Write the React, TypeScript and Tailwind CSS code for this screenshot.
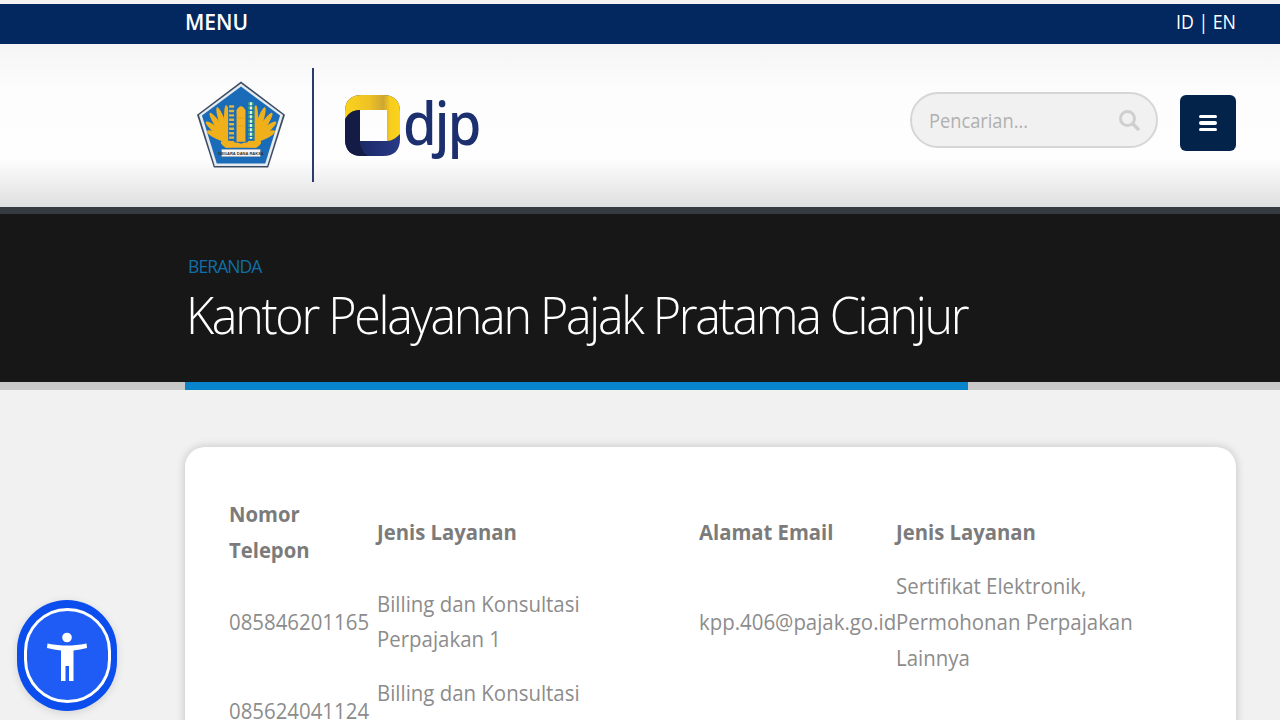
import React from "react";

const FEATHERS = [
  { a: -4, ry: 18 },
  { a: -19, ry: 18 },
  { a: -34, ry: 17 },
  { a: -50, ry: 15 },
  { a: -66, ry: 12 },
];

function Wing() {
  return (
    <g>
      {FEATHERS.map((f) => (
        <ellipse
          key={f.a}
          cx="33"
          cy={60 - f.ry}
          rx="3.2"
          ry={f.ry}
          fill="#f0b01a"
          transform={`rotate(${f.a} 33 60)`}
        />
      ))}
      <path d="M25 62 C27 55 35 55 38 60 C40 63 40 65 42 66 L30 67 C28 66 26 64 25 62Z" fill="#f0b01a" />
    </g>
  );
}

function Emblem() {
  return (
    <svg width="90" height="90" viewBox="0 0 91 90" className="shrink-0">
      <polygon points="45.5,0 90,33.5 73,87 18,87 1,33.5" fill="#3c4c63" />
      <polygon points="45.5,2 88,34 72,85.5 19,85.5 3,34" fill="#e6ebef" />
      <polygon points="45.5,5 85,34.5 70,83 21,83 6,34.5" fill="#1b6cb8" />
      <Wing />
      <g transform="translate(91 0) scale(-1 1)">
        <Wing />
      </g>
      <path d="M36 22 L36 60" stroke="#1b6cb8" strokeWidth="7" />
      <path d="M36 22 L36 60" stroke="#55603a" strokeWidth="1" />
      <path d="M36 24 L36 58" stroke="#d8b848" strokeWidth="5" strokeDasharray="2.5 2" />
      <path d="M55.5 20 L55.5 60" stroke="#1b6cb8" strokeWidth="7.5" />
      <path d="M41 61 L41 29 Q45.5 21 50 29 L50 61Z" fill="#f3b022" />
      <path d="M41 37 H50 M41 45 H50" stroke="#d89a1a" strokeWidth="0.6" />
      <path d="M55.5 21 L55.5 58" stroke="#38a878" strokeWidth="5.5" strokeDasharray="3 1.4" />
      <path d="M55.5 21 L55.5 58" stroke="#eaf6ee" strokeWidth="2" strokeDasharray="3 1.4" />
      <path d="M30 67 C36 61 40 61 45.5 63 C51 61 55 61 61 67Z" fill="#f3b022" />
      <rect x="26" y="68.5" width="39" height="7.5" fill="#f6f6f6" stroke="#8a8a8a" strokeWidth="0.4" />
      <text x="45.5" y="74" textAnchor="middle" fontSize="4.1" fontWeight="700" fill="#333" fontFamily="'Liberation Sans',sans-serif">NEGARA DANA RAKSA</text>
    </svg>
  );
}

function DjpMark() {
  return (
    <svg width="55" height="61" viewBox="0 0 55 61" className="shrink-0">
      <defs>
        <linearGradient id="yl" x1="0" y1="0" x2="1" y2="0">
          <stop offset="0" stopColor="#fbd31b" />
          <stop offset="0.45" stopColor="#eec126" />
          <stop offset="0.7" stopColor="#cda633" />
          <stop offset="0.82" stopColor="#f7cd1e" />
          <stop offset="1" stopColor="#fbd31b" />
        </linearGradient>
        <linearGradient id="nv" x1="0" y1="0" x2="1" y2="0">
          <stop offset="0" stopColor="#18235a" />
          <stop offset="1" stopColor="#283a88" />
        </linearGradient>
      </defs>
      <path
        fillRule="evenodd"
        d="M0 17 Q0 0 17 0 H38 Q55 0 55 17 V44 Q55 61 38 61 H17 Q0 61 0 44Z M15 15 V46 H42 V15Z"
        fill="url(#nv)"
      />
      <path d="M0 25 V17 Q0 0 17 0 H38 Q55 0 55 17 V39 C51 43 47 46 42 46 V15 H15 C8 15 2 19 0 25Z" fill="url(#yl)" />
      <path d="M0 25 C2 19 8 15 15 15 V46 C15 52 18 58 23 61 H17 Q0 61 0 44Z" fill="#141c45" />
    </svg>
  );
}

function Accessibility() {
  return (
    <div className="absolute left-[17px] top-[600px] flex h-[111px] w-[100px] items-center justify-center rounded-full bg-[#0b4ded] shadow-[0_2px_8px_rgba(0,0,0,0.12)]">
      <div className="flex h-[95px] w-[87px] items-center justify-center rounded-full border-[3px] border-white bg-[#1f5cf5]">
        <svg width="42" height="52" viewBox="0 0 42 52">
          <circle cx="21" cy="7.5" r="4.8" fill="#fff" />
          <path d="M1.5 13.5 C9 15 15 15.5 21 15.5 C27 15.5 33 15 40.5 13.5 L41 18 C36 19 32 20 27.5 20.5 L27.5 51 L23 51 L23 36 L19.5 36 L19.5 51 L15 51 L15 20.5 C10 20 6 19 1 18Z" fill="#fff" />
        </svg>
      </div>
    </div>
  );
}

const th = "align-middle text-left text-[21px] font-bold leading-[36px] text-[#7b7b7b] whitespace-nowrap";
const td = "align-middle text-[21px] font-normal leading-[36px] text-[#8c8c8c] whitespace-nowrap";
const tdTwoLine = "align-middle text-[21px] font-normal leading-[35px] text-[#8c8c8c] whitespace-nowrap";
const thText = "inline-block origin-left scale-x-[0.965]";
const tdText = "inline-block origin-left scale-x-[0.972]";

export default function App() {
  return (
    <div className="relative flex h-[720px] w-[1280px] flex-col overflow-hidden bg-[#f1f1f1] font-['Open_Sans',sans-serif]">
      <div className="h-1 shrink-0 bg-[#f4f4f4]" />
      <div className="flex h-10 shrink-0 items-center justify-between bg-[#03275f] pl-[185px] pr-[44px] text-white">
        <span className="-mt-1 text-[21px] font-semibold leading-none">MENU</span>
        <span className="-mt-1 inline-block origin-right scale-x-[0.91] text-[19.5px] font-medium leading-none">ID | EN</span>
      </div>
      <div className="flex h-[163px] shrink-0 items-center justify-between bg-[linear-gradient(#f5f5f5_0%,#fdfdfd_30%,#fefefe_70%,#dfdfdf_100%)] pl-[196px] pr-[44px]">
        <div className="flex items-center">
          <Emblem />
          <div className="mb-[2px] ml-[26px] mr-[31px] h-[114px] w-[2px] bg-[#2b3a70]" />
          <DjpMark />
          <span className="ml-[3px] -mt-[6px] inline-block w-[75px] origin-left scale-x-[0.92] font-['Noto_Sans',sans-serif] text-[59px] font-medium leading-none tracking-[-2px] text-[#1c2f6e]">djp</span>
        </div>
        <div className="mb-2 flex items-start gap-[22px]">
          <div className="flex h-[56px] w-[248px] items-center justify-between rounded-full border-2 border-[#d6d6d6] bg-[#f1f1f1] pl-[17px] pr-[16px]">
            <span className="inline-block origin-left scale-x-[0.89] text-[20.5px] text-[#b0b0b0]">Pencarian...</span>
            <svg width="22" height="22" viewBox="0 0 22 22" fill="none" stroke="#cfcfcf">
              <circle cx="9.5" cy="9.5" r="7" strokeWidth="3" />
              <path d="M15 15 L20 20" strokeWidth="3.5" strokeLinecap="round" />
            </svg>
          </div>
          <div className="mt-[3px] flex h-[56px] w-[56px] items-center justify-center rounded-[6px] bg-[#04234a]">
            <div className="flex w-[18px] flex-col gap-[3px]">
              <div className="h-[3.5px] rounded-sm bg-white" />
              <div className="h-[3.5px] rounded-sm bg-white" />
              <div className="h-[3.5px] rounded-sm bg-white" />
            </div>
          </div>
        </div>
      </div>
      <div className="h-[7px] shrink-0 bg-[#353b40]" />
      <div className="flex h-[168px] shrink-0 flex-col bg-[#171717] pl-[186px] pt-[40px]">
        <span className="ml-[2px] text-[17.5px] font-normal leading-6 tracking-[-0.9px] text-[#0f6fa8]">BERANDA</span>
        <h1 className="mt-[6px] whitespace-nowrap">
          <span className="inline-block origin-left scale-x-[0.932] text-[52px] font-light leading-[60px] tracking-[-2.5px] text-white">Kantor Pelayanan Pajak Pratama Cianjur</span>
        </h1>
      </div>
      <div className="h-2 shrink-0 bg-[#c8c8c8] pl-[185px]">
        <div className="h-full w-[783px] bg-[#0884ca]" />
      </div>
      <div className="flex-1 pl-[185px] pr-[44px] pt-[57px]">
        <div className="h-[500px] rounded-[20px] bg-white px-[44px] pt-[49px] shadow-[0_0_10px_rgba(0,0,0,0.2)]">
          <table className="w-[920px] table-fixed border-collapse">
            <colgroup>
              <col className="w-[148px]" />
              <col className="w-[322px]" />
              <col className="w-[197px]" />
              <col className="w-[253px]" />
            </colgroup>
            <tbody>
              <tr>
                <th className={th}><span className={thText}>Nomor<br />Telepon</span></th>
                <th className={th}><span className={thText}>Jenis Layanan</span></th>
                <th className={th}><span className={thText}>Alamat Email</span></th>
                <th className={th}><span className={thText}>Jenis Layanan</span></th>
              </tr>
              <tr>
                <td className={td}><span className={tdText}>085846201165</span></td>
                <td className={tdTwoLine}><span className={tdText}>Billing dan Konsultasi<br />Perpajakan 1</span></td>
                <td className={td}><span className={tdText}>kpp.406@pajak.go.id</span></td>
                <td className={td}><span className={tdText}>Sertifikat Elektronik,<br />Permohonan Perpajakan<br />Lainnya</span></td>
              </tr>
              <tr>
                <td className={td}><span className={tdText}>085624041124</span></td>
                <td className={tdTwoLine}><span className={tdText}>Billing dan Konsultasi<br />Perpajakan 2</span></td>
                <td className={td} />
                <td className={td} />
              </tr>
            </tbody>
          </table>
        </div>
      </div>
      <Accessibility />
    </div>
  );
}
